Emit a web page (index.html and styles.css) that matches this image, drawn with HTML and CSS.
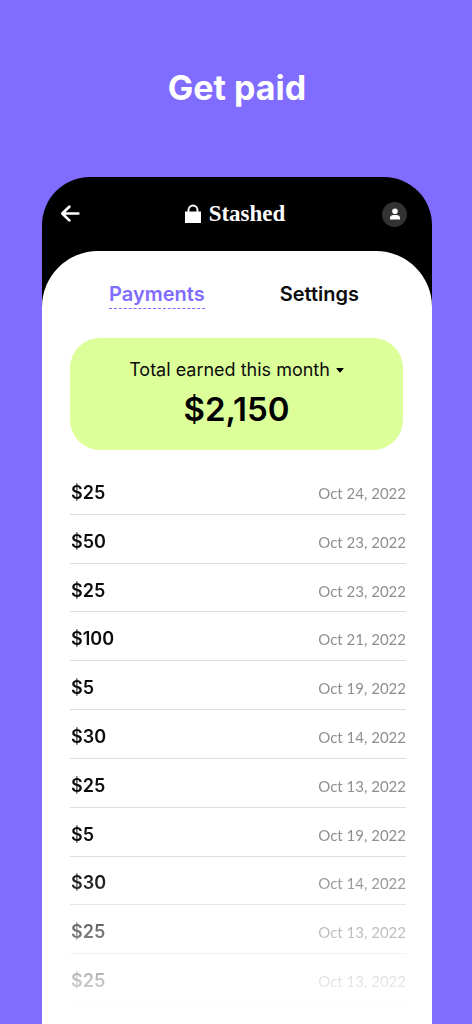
FILE: index.html
```html
<!DOCTYPE html>
<html lang="en">
<head>
<meta charset="utf-8">
<meta name="viewport" content="width=device-width, initial-scale=1">
<title>Get paid</title>
<link rel="stylesheet" href="styles.css">
</head>
<body>
<main class="page">
  <h1 class="headline">Get paid</h1>
  <section class="phone">
    <header class="topbar">
      <button class="icon-button back" type="button" aria-label="Back">
        <svg width="20" height="18" viewBox="0 0 20 18" fill="none" stroke="#fff" stroke-width="2.7" stroke-linecap="round" stroke-linejoin="round"><path d="M18.300 8.500H2.300M9.300 1.800 2.300 8.500l7 6.900"/></svg>
      </button>
      <div class="brand">
        <svg width="18" height="20" viewBox="0 0 18 20"><path d="M1 7.500h16V19H1z" fill="#fff"/><path d="M4.500 8V6a4.500 4.500 0 0 1 9 0v2" fill="none" stroke="#fff" stroke-width="1.900"/></svg>
        <span class="brand-name">Stashed</span>
      </div>
      <button class="icon-button avatar" type="button" aria-label="Account">
        <svg width="12" height="12" viewBox="0 0 12 12" fill="#fff"><circle cx="6" cy="3.300" r="2.800"/><path d="M1 11.400V10c0-2 1.600-3 3.400-3h3.200C9.400 7 11 8 11 10v1.400z"/></svg>
      </button>
    </header>
    <div class="sheet">
      <nav class="tabs">
        <button class="tab tab-active" type="button" aria-current="page">Payments</button>
        <button class="tab" type="button">Settings</button>
      </nav>
      <div class="summary">
        <div class="period">
          <select class="period-select" aria-label="Period"><option>Total earned this month</option></select>
          <svg class="caret" width="8" height="5" viewBox="0 0 8 5"><path d="M.8.5h6.400L4 4.300z" fill="#000" stroke="#000" stroke-linejoin="round"/></svg>
        </div>
        <p class="total">$2,150</p>
      </div>
      <ul class="payments">
        <li class="payment"><span class="amount">$25</span><time class="date">Oct 24, 2022</time></li>
        <li class="payment"><span class="amount">$50</span><time class="date">Oct 23, 2022</time></li>
        <li class="payment"><span class="amount">$25</span><time class="date">Oct 23, 2022</time></li>
        <li class="payment"><span class="amount">$100</span><time class="date">Oct 21, 2022</time></li>
        <li class="payment"><span class="amount">$5</span><time class="date">Oct 19, 2022</time></li>
        <li class="payment"><span class="amount">$30</span><time class="date">Oct 14, 2022</time></li>
        <li class="payment"><span class="amount">$25</span><time class="date">Oct 13, 2022</time></li>
        <li class="payment"><span class="amount">$5</span><time class="date">Oct 19, 2022</time></li>
        <li class="payment"><span class="amount">$30</span><time class="date">Oct 14, 2022</time></li>
        <li class="payment"><span class="amount">$25</span><time class="date">Oct 13, 2022</time></li>
        <li class="payment"><span class="amount">$25</span><time class="date">Oct 13, 2022</time></li>
      </ul>
    </div>
  </section>
</main>
</body>
</html>
```
FILE: styles.css
```css
* { box-sizing: border-box; }

body {
  margin: 0;
  background: #806cff;
  color: #0c0c0c;
  font-family: Inter, "Liberation Sans", sans-serif;
}

button, select {
  margin: 0;
  padding: 0;
  border: 0;
  background: none;
  color: inherit;
  font: inherit;
  cursor: pointer;
}

svg { display: block; flex: none; }

.page {
  display: flex;
  flex-direction: column;
  min-height: 100vh;
  padding: 68px 40px 0 42px;
}

.headline {
  margin: 0 0 69px;
  color: #fff;
  font-size: 34px;
  line-height: 40px;
  font-weight: 700;
  text-align: center;
}

.phone {
  display: flex;
  flex: 1;
  flex-direction: column;
  border-radius: 48px 48px 0 0;
  background: #000;
}

.topbar {
  display: grid;
  grid-template-columns: 1fr auto 1fr;
  align-items: center;
  height: 74px;
  padding: 0 25px 0 18px;
}

.icon-button { display: flex; align-items: center; justify-content: center; }
.back { width: 20px; height: 26px; }

.avatar {
  justify-self: end;
  width: 25px;
  height: 25px;
  border-radius: 50%;
  background: #333;
}

.brand { display: flex; align-items: center; gap: 7px; padding-left: 2px; }

.brand-name {
  color: #fff;
  font-family: "Liberation Serif", serif;
  font-size: 23px;
  line-height: 26px;
  font-weight: 700;
}

.sheet {
  flex: 1;
  padding: 28px 26px 0 28px;
  border-radius: 56px 56px 0 0;
  background: #fff;
}

.tabs {
  display: flex;
  justify-content: center;
  gap: 75px;
  padding-right: 8px;
}

.tab {
  height: 30px;
  border-bottom: 1px dashed transparent;
  font-size: 20px;
  line-height: 28px;
  font-weight: 600;
}

.tab-active { border-color: #806cff; color: #806cff; }

.summary {
  margin: 29px 3px 0 0;
  padding: 20px 0;
  border-radius: 30px;
  background: #dcff9a;
  text-align: center;
}

.period {
  display: flex;
  align-items: center;
  justify-content: center;
  gap: 6px;
}

.period-select {
  appearance: none;
  field-sizing: content;
  font-size: 18px;
  line-height: 24px;
}

.total {
  margin: 6px 0 0;
  color: #000;
  font-size: 33px;
  line-height: 42px;
  font-weight: 600;
}

.payments {
  display: grid;
  grid-auto-rows: 1fr;
  min-height: 537px;
  margin: 16px 0 0;
  padding: 0;
  list-style: none;
  mask-image: linear-gradient(#000 75%, transparent 103%);
}

.payment {
  display: flex;
  align-items: center;
  justify-content: space-between;
  padding-top: 6px;
  border-bottom: 1px solid #dedede;
}

.amount {
  padding-left: 1px;
  font-size: 18px;
  line-height: 24px;
  font-weight: 600;
}

.date {
  color: #8f8f8f;
  font-family: Lato, sans-serif;
  font-size: 15px;
  line-height: 24px;
}
```
